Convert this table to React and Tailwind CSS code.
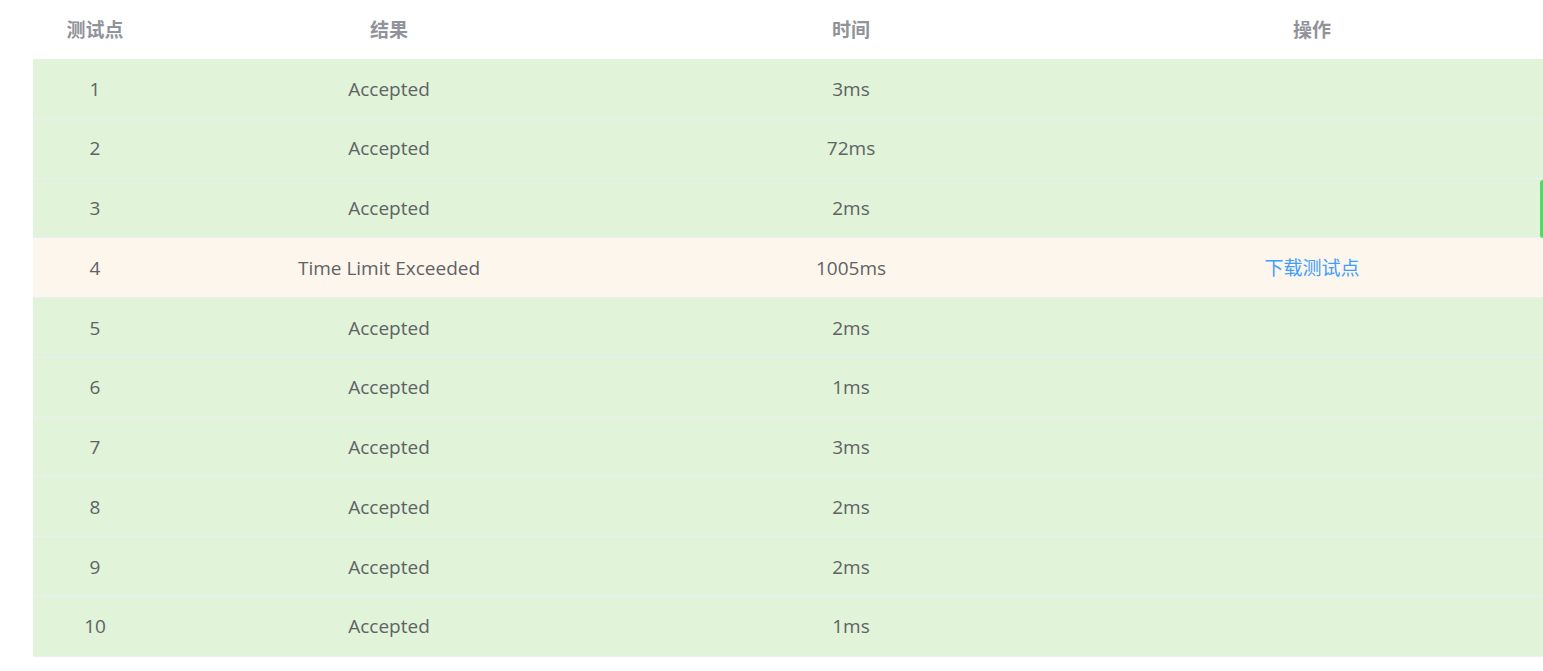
const rows = [
  { id: 1, result: "Accepted", time: "3ms" },
  { id: 2, result: "Accepted", time: "72ms" },
  { id: 3, result: "Accepted", time: "2ms" },
  { id: 4, result: "Time Limit Exceeded", time: "1005ms", warn: true },
  { id: 5, result: "Accepted", time: "2ms" },
  { id: 6, result: "Accepted", time: "1ms" },
  { id: 7, result: "Accepted", time: "3ms" },
  { id: 8, result: "Accepted", time: "2ms" },
  { id: 9, result: "Accepted", time: "2ms" },
  { id: 10, result: "Accepted", time: "1ms" },
]

const cols = "grid grid-cols-[124px_464px_460px_1fr] items-center text-center"

export default function App() {
  return (
    <div className="relative min-h-[671px] bg-white pl-[33px] font-['Open_Sans','Noto_Sans_CJK_SC',sans-serif] text-[19px]">
      <div className={`${cols} h-[59px] pt-px font-bold text-[#909399]`}>
        <div>测试点</div>
        <div>结果</div>
        <div>时间</div>
        <div>操作</div>
      </div>
      {rows.map((r) => (
        <div
          key={r.id}
          className={`${cols} h-[59.75px] border-b border-[#ebeef5] pt-px text-[#606266] ${r.warn ? "bg-[#fdf6ec]" : "bg-[#e1f3d8]"}`}
        >
          <div>{r.id}</div>
          <div>{r.result}</div>
          <div>{r.time}</div>
          <div>
            {r.warn && <a className="cursor-pointer text-[#409eff]">下载测试点</a>}
          </div>
        </div>
      ))}
      <div className="absolute right-0 top-[180px] h-[58px] w-[3px] rounded-l bg-[#5ad36a]" />
    </div>
  )
}
